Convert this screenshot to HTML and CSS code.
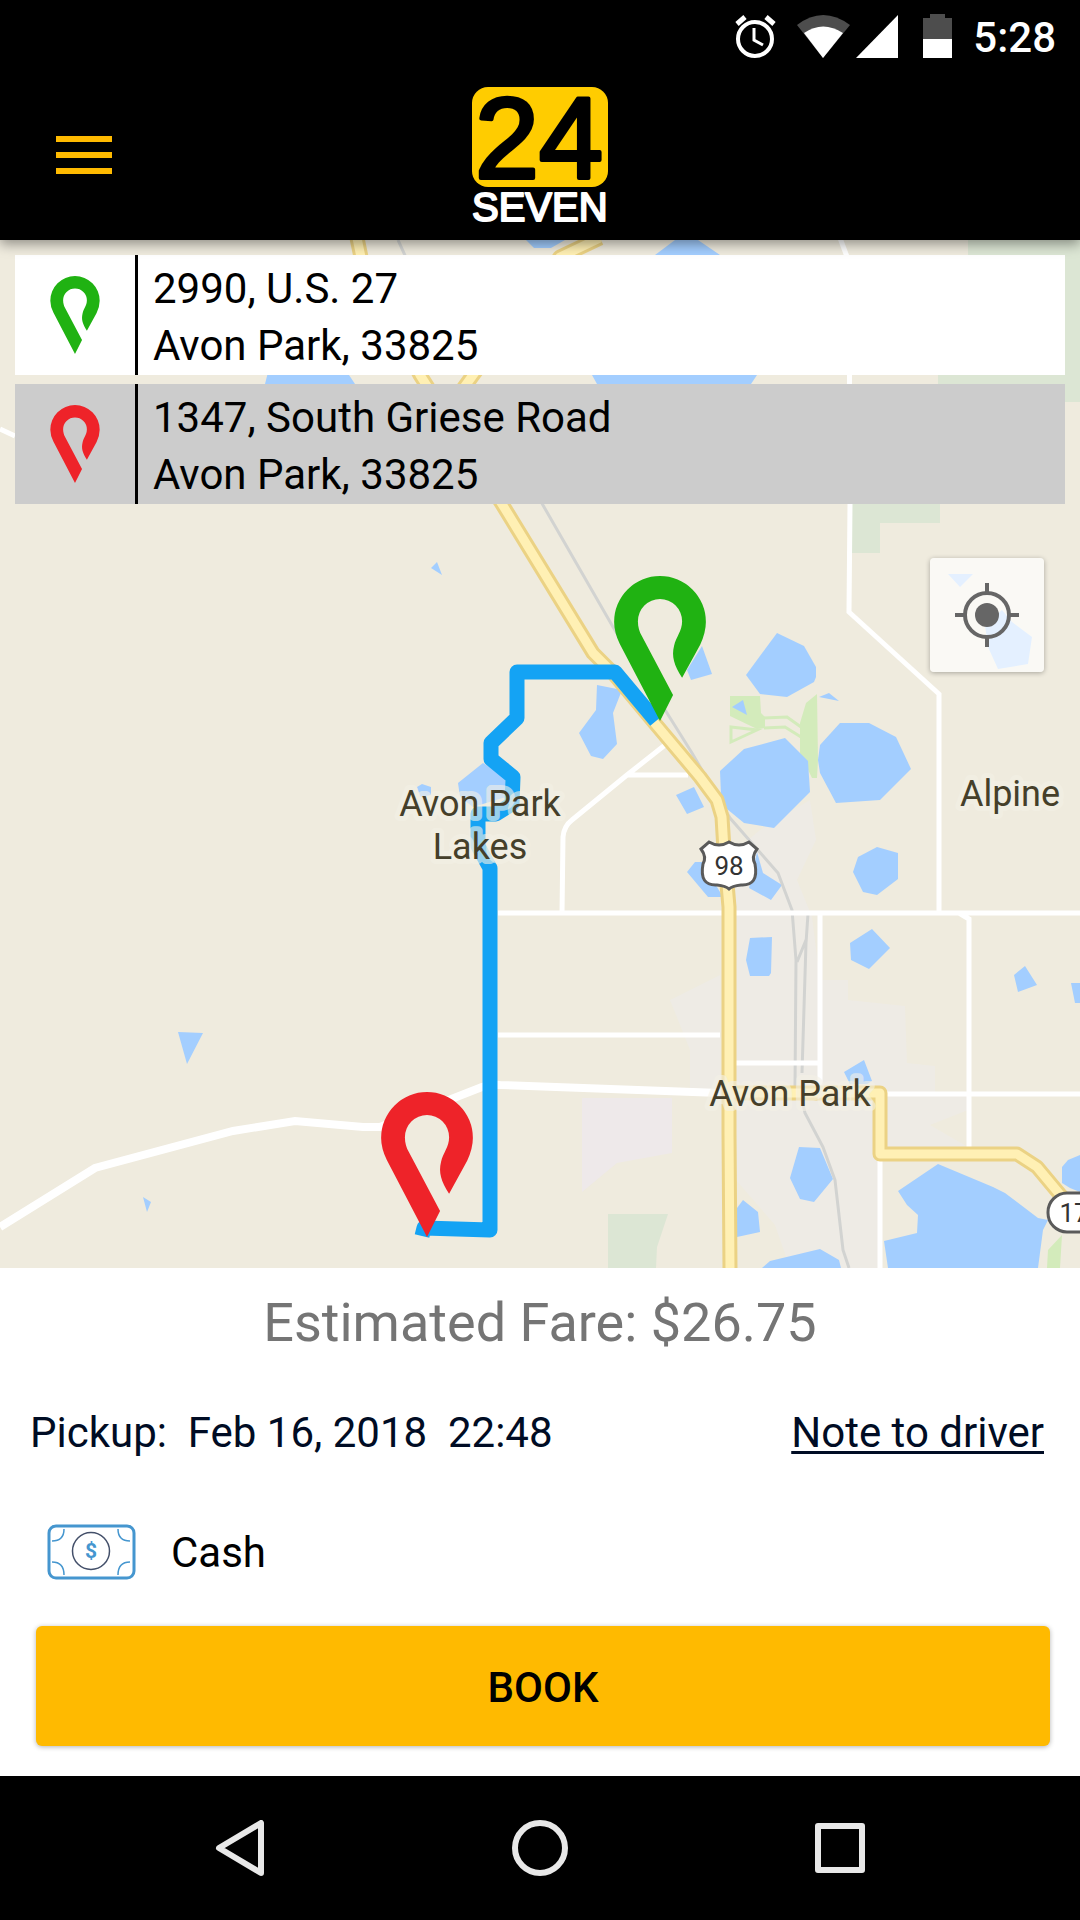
FILE: index.html
```html
<!DOCTYPE html>
<html lang="en">
<head>
    <meta charset="UTF-8">
    <meta name="viewport" content="width=device-width, initial-scale=1.0">
    <title>24 Seven</title>
    <link rel="stylesheet" href="styles.css">
</head>
<body>
    <!-- pin shape used in the address cards and on the map -->
    <svg class="sprite" width="0" height="0" aria-hidden="true">
        <symbol id="pin" viewBox="-137 -433 274 433">
            <path d="M0 0L-120 -230Q-137 -265 -137 -296A137 137 0 0 1 137 -296Q137 -265 120 -228L66 -129C42 -168 34 -192 42 -225C48 -252 66 -268 66 -298A66 66 0 0 0 -66 -298C-66 -280 -61 -266 -55 -255L39 -78Z"/>
        </symbol>
    </svg>

    <div class="status-bar">
        <svg class="alarm" width="41" height="44" viewBox="0 0 41 44">
            <circle cx="20" cy="25" r="17" fill="none" stroke="#fff" stroke-width="4"/>
            <path d="M2 10L10 3M39 10L31 3" stroke="#fff" stroke-width="5"/>
            <path d="M19 14V26L28 31" fill="none" stroke="#fff" stroke-width="3"/>
        </svg>
        <svg class="wifi" width="53" height="43" viewBox="0 0 53 43">
            <path d="M0 10Q26 -10 53 10L26 43Z" fill="#4d4d4d"/>
            <path d="M7 18Q26 5 46 18L26 43Z" fill="#fff"/>
        </svg>
        <svg class="signal" width="42" height="43" viewBox="0 0 42 43">
            <path d="M42 0V43H0Z" fill="#fff"/>
        </svg>
        <svg class="battery" width="29" height="44" viewBox="0 0 29 44">
            <path d="M0 4H7V0H22V4H29V25H0Z" fill="#4d4d4d"/>
            <path d="M0 25H29V44H0Z" fill="#fff"/>
        </svg>
        <span class="clock">5:28</span>
    </div>

    <header class="top-bar">
        <button class="menu" aria-label="Menu"><span></span><span></span><span></span></button>
        <svg class="logo" width="136" height="138" viewBox="0 0 136 138" role="img" aria-label="24 Seven">
            <rect width="136" height="100" rx="16" fill="#ffcc00"/>
            <text class="logo-num" x="3" y="91">24</text>
            <text class="logo-word" x="0" y="134">SEVEN</text>
        </svg>
        <span></span>
    </header>

    <main class="map">
        <svg class="map-canvas" viewBox="0 240 1080 1028" preserveAspectRatio="xMidYMid slice">
            <!-- town and parks -->
            <path class="town" d="M736 850L760 830L810 800L816 840L797 880L812 917L820 980H848V1000L905 1006L907 1063L935 1066V1092L968 1094V1110L930 1125L968 1147L880 1154V1268H790L775 1225L736 1180Z"/>
            <path class="town" d="M670 1000L720 975V1090H690V1050Z"/>
            <path class="mall" d="M582 1098H672V1153L617 1163L582 1192Z"/>
            <path class="park" d="M968 240H1080V402H1060V384H938V255H968ZM852 504H940V523H880V553H852ZM608 1214H668L657 1247L656 1268H608Z"/>
            <path class="golf" d="M730 696H760L761 713L765 717V728L757 729L730 716ZM817 694L818 760L817 778H812L800 753V723L806 703ZM1062 1235L1060 1268H1047L1048 1250Z"/>
            <path class="golf-line" d="M764 718L787 717L801 727M764 728L785 727L801 737M731 727L757 730L731 742Z"/>

            <!-- lakes -->
            <g class="water">
                <path d="M777 633L804 646L816 667V677L814 682L787 697L760 694L746 675Z"/>
                <path d="M785 738L808 761L810 792L774 828L744 823L727 809L721 795L720 771L744 749Z"/>
                <path d="M840 723H869L896 737L911 769L880 800L836 803L820 773L818 760L820 745Z"/>
                <path d="M877 847L898 853V879L877 895L863 892L853 872L858 857Z"/>
                <path d="M757 852L763 873L782 885L771 900L749 888ZM695 862H702L723 897H708L687 872Z"/>
                <path d="M819 697L829 693L839 701ZM732 707L743 700L747 715Z"/>
                <path d="M948 574H973L960 587ZM1012 622L1032 637L1028 664L998 669L988 647L985 625L1002 610Z"/>
                <path d="M655 255L675 240H698L720 255ZM592 375H757L751 384H597ZM265 384L268 372H347L355 384ZM526 240H565L551 248H534Z"/>
                <path d="M437 562L442 575L431 568ZM597 685L622 690L613 713L617 744L603 759L591 756L579 733L596 710Z"/>
                <path d="M702 646L712 674L691 680L687 670ZM676 795L694 787L704 807L687 814Z"/>
                <path d="M483 763L505 777L506 797L473 807L460 797L458 783ZM417 787L422 784L431 787V795L420 797Z"/>
                <path d="M178 1032L203 1033L187 1064ZM143 1197L151 1202L147 1212Z"/>
                <path d="M750 938L772 937L771 973L769 976H750L746 960ZM872 929L890 948L869 969L851 960L850 943Z"/>
                <path d="M1025 966L1037 985L1018 992L1014 975ZM1071 983H1080V1003H1075Z"/>
                <path d="M844 1072L864 1060L872 1081L867 1084H850ZM799 1147L820 1148L833 1179L814 1202L800 1199L790 1178Z"/>
                <path d="M743 1200L758 1212L760 1232L737 1237V1208ZM762 1268L770 1261L820 1249L839 1260L841 1268Z"/>
                <path d="M938 1164L993 1187L1005 1193L1038 1218L1048 1220L1043 1230L1038 1268H888L884 1241L917 1233L918 1215L907 1205L898 1191Z"/>
                <path d="M1080 1155L1068 1160L1062 1167V1183L1070 1188L1080 1192Z"/>
            </g>

            <!-- railway -->
            <path class="rail" d="M398 240L408 262M540 500L613 627L667 713L692 753L730 818L778 873L792 910L796 960L795 1087M808 914L806 943L802 1073M806 940L797 962M802 1100L805 1113L823 1147L835 1180L843 1250L849 1268"/>

            <!-- small roads -->
            <g class="road">
                <path d="M840 238L849 262L850 504L849 612L939 694V912"/>
                <path d="M498 913H1080M820 913V1092M959 913L969 919V1147M885 1094H1080M736 1063H820M498 1035H720M880 1160V1268"/>
                <path d="M562 913L563 837Q564 826 572 820L627 775L665 745M627 775H688M0 429L15 436"/>
                <path class="wide" d="M0 1227L95 1168L233 1131L295 1121L363 1127H380L482 1087Q490 1084 500 1085L720 1093"/>
            </g>

            <!-- highways -->
            <g class="highway-edge">
                <path d="M357 238L362 262L420 375L502 504L593 653L613 673L658 727L700 777L717 800L722 817L724 850L729 907V1133L730 1270"/>
                <path d="M600 238L560 257L473 375L455 400M729 1093H880V1154H1017L1037 1167L1062 1197"/>
            </g>
            <g class="highway">
                <path d="M357 238L362 262L420 375L502 504L593 653L613 673L658 727L700 777L717 800L722 817L724 850L729 907V1133L730 1270"/>
                <path d="M600 238L560 257L473 375L455 400M729 1093H880V1154H1017L1037 1167L1062 1197"/>
            </g>

            <path class="route" d="M656 721L615 672H517V718L491 743V759L513 777L512 804L496 814H478V846L490 868V1230L424 1228L422 1236"/>

            <!-- road signs -->
            <path class="sign" d="M709 842Q719 848 729 842Q739 848 749 842L757 849Q751 857 755 864Q759 886 741 885Q732 886 729 889Q726 886 717 885Q699 886 703 864Q707 857 701 849Z"/>
            <text class="sign-text" x="729" y="875">98</text>
            <rect class="sign" x="1048" y="1193" width="60" height="39" rx="19"/>
            <text class="sign-text" x="1074" y="1222">17</text>

            <text class="place" x="480" y="816">Avon Park</text>
            <text class="place" x="480" y="859">Lakes</text>
            <text class="place" x="1010" y="806">Alpine</text>
            <text class="place" x="790" y="1106">Avon Park</text>

            <use class="pin-from" href="#pin" x="614" y="576" width="92" height="145"/>
            <use class="pin-to" href="#pin" x="381" y="1092" width="92" height="145"/>
        </svg>

        <div class="addresses">
            <button class="address">
                <span class="address-icon"><svg class="pin-from" width="50" height="78"><use href="#pin"/></svg></span>
                <span class="address-text">2990, U.S. 27<br>Avon Park, 33825</span>
            </button>
            <button class="address address-to">
                <span class="address-icon"><svg class="pin-to" width="50" height="78"><use href="#pin"/></svg></span>
                <span class="address-text">1347, South Griese Road<br>Avon Park, 33825</span>
            </button>
        </div>

        <button class="locate" aria-label="My location">
            <svg width="64" height="64" viewBox="0 0 64 64">
                <circle cx="32" cy="32" r="22" fill="none" stroke="#666" stroke-width="4"/>
                <circle cx="32" cy="32" r="12" fill="#666"/>
                <path d="M32 0V10M32 54V64M0 32H10M54 32H64" stroke="#666" stroke-width="4"/>
            </svg>
        </button>
    </main>

    <section class="booking">
        <p class="fare">Estimated Fare: $26.75</p>
        <div class="pickup">
            <span class="pickup-time">Pickup:  Feb 16, 2018  22:48</span>
            <a href="#note">Note to driver</a>
        </div>
        <button class="payment">
            <svg width="89" height="56" viewBox="0 0 89 56">
                <rect x="2" y="2" width="85" height="52" rx="7" fill="none" stroke="#4596cf" stroke-width="3"/>
                <path d="M17 5Q17 17 5 17M71 5Q71 17 83 17M5 38Q17 38 17 51M83 38Q71 38 71 51" fill="none" stroke="#4596cf" stroke-width="1.5"/>
                <circle cx="44" cy="27" r="18.5" fill="none" stroke="#44506a" stroke-width="1.5"/>
                <text class="dollar" x="44" y="34">$</text>
            </svg>
            <span>Cash</span>
        </button>
        <button class="book">BOOK</button>
    </section>

    <nav class="nav-bar">
        <button aria-label="Back">
            <svg width="56" height="56" viewBox="0 0 56 56"><path d="M49 3V53L7 28Z"/></svg>
        </button>
        <button aria-label="Home">
            <svg width="56" height="56" viewBox="0 0 56 56"><circle cx="28" cy="28" r="25"/></svg>
        </button>
        <button aria-label="Recent apps">
            <svg width="56" height="56" viewBox="0 0 56 56"><rect x="6" y="6" width="44" height="44"/></svg>
        </button>
    </nav>
</body>
</html>
```

FILE: styles.css
```css
* {
    box-sizing: border-box;
}
body {
    margin: 0;
    min-height: 100vh;
    display: flex;
    flex-direction: column;
    font-family: Roboto, "Liberation Sans", sans-serif;
    font-size: 42px;
    color: #000;
    background: #fff;
}
button {
    font: inherit;
    color: inherit;
    background: none;
    border: none;
    padding: 0;
    cursor: pointer;
}
svg {
    display: block;
}
.sprite {
    position: absolute;
}

/* status bar */
.status-bar {
    display: flex;
    justify-content: flex-end;
    align-items: center;
    height: 72px;
    padding-right: 24px;
    background: #000;
    color: #fff;
}
.wifi {
    margin-left: 21px;
}
.signal {
    margin-left: 6px;
}
.battery {
    margin-left: 25px;
}
.clock {
    margin-left: 21px;
    padding-top: 4px;
    font-weight: 500;
    line-height: 48px;
}

/* header */
.top-bar {
    display: grid;
    grid-template-columns: 1fr auto 1fr;
    align-items: center;
    height: 168px;
    padding: 0 56px;
    background: #000;
    box-shadow: 0 4px 12px rgba(0, 0, 0, 0.4);
    z-index: 1;
}
.menu {
    display: flex;
    flex-direction: column;
    gap: 10px;
    width: 56px;
    padding-bottom: 2px;
}
.menu span {
    height: 6px;
    background: #ffba00;
}
.logo {
    overflow: visible;
}
.logo-num,
.logo-word {
    font-family: "Liberation Sans", Arial, sans-serif;
    stroke-linejoin: round;
}
.logo-num {
    font-size: 115px;
    stroke: #000;
    stroke-width: 4px;
}
.logo-word {
    font-size: 40px;
    fill: #fff;
    stroke: #fff;
    stroke-width: 2px;
}

/* map */
.map {
    position: relative;
    flex: 1;
    min-height: 600px;
    padding: 15px;
    background: #efebde;
}
.map-canvas {
    position: absolute;
    top: 0;
    left: 0;
    width: 100%;
    height: 100%;
}
.town {
    fill: #eeebe5;
}
.mall {
    fill: #eee9ea;
}
.park {
    fill: #dce6d4;
}
.golf {
    fill: #d3ebbb;
}
.golf-line {
    fill: none;
    stroke: #d3ebbb;
    stroke-width: 3px;
}
.water {
    fill: #a3ceff;
}
.rail {
    fill: none;
    stroke: #d2d3d1;
    stroke-width: 3px;
}
.road {
    fill: none;
    stroke: #fff;
    stroke-width: 5px;
}
.wide {
    stroke-width: 8px;
}
.highway-edge {
    fill: none;
    stroke: #ebd284;
    stroke-width: 15px;
    stroke-linejoin: round;
}
.highway {
    fill: none;
    stroke: #fff0b4;
    stroke-width: 9px;
    stroke-linejoin: round;
}
.route {
    fill: none;
    stroke: #14a3f4;
    stroke-width: 15px;
    stroke-linejoin: round;
}
.sign {
    fill: #fff;
    stroke: #5a5a5a;
    stroke-width: 3px;
}
.sign-text {
    font-size: 26px;
    fill: #333;
    text-anchor: middle;
}
.place {
    font-size: 36px;
    fill: #453f2a;
    text-anchor: middle;
    stroke: rgba(244, 241, 230, 0.6);
    stroke-width: 10px;
    stroke-linejoin: round;
    paint-order: stroke;
}
.pin-from {
    fill: #20b212;
}
.pin-to {
    fill: #ee2329;
}
.addresses {
    position: relative;
    display: flex;
    flex-direction: column;
    gap: 9px;
}
.address {
    display: flex;
    height: 120px;
    background: #fff;
    text-align: left;
}
.address-to {
    background: #ccc;
}
.address-icon {
    display: flex;
    align-items: center;
    justify-content: center;
    width: 123px;
    height: 120px;
    border-right: 3px solid #000;
}
.address-text {
    padding: 5px 15px 0;
    line-height: 57px;
}
.locate {
    position: absolute;
    top: 318px;
    right: 36px;
    display: flex;
    align-items: center;
    justify-content: center;
    width: 114px;
    height: 114px;
    background: rgba(255, 255, 255, 0.7);
    border-radius: 4px;
    box-shadow: 0 1px 5px rgba(0, 0, 0, 0.3);
}

/* booking panel */
.booking {
    display: flex;
    flex-direction: column;
    padding: 23px 30px 30px;
}
.fare {
    margin: 0 0 53px;
    font-size: 54px;
    line-height: 64px;
    text-align: center;
    color: #757575;
}
.pickup {
    display: flex;
    justify-content: space-between;
    padding-right: 6px;
    margin-bottom: 66px;
    line-height: 50px;
    color: #000c24;
}
.pickup-time {
    white-space: pre;
}
.pickup a {
    color: inherit;
    text-decoration-thickness: 3px;
    text-underline-offset: 4px;
}
.payment {
    display: flex;
    align-items: center;
    gap: 35px;
    height: 56px;
    margin: 0 0 46px 17px;
}
.dollar {
    font-size: 21px;
    font-weight: bold;
    fill: #4596cf;
    text-anchor: middle;
}
.book {
    height: 120px;
    margin-left: 6px;
    padding-top: 2px;
    background: #ffba00;
    border-radius: 6px;
    box-shadow: 0 1px 5px rgba(0, 0, 0, 0.3);
    font-weight: 500;
}

/* android buttons */
.nav-bar {
    display: grid;
    grid-template-columns: repeat(3, 1fr);
    justify-items: center;
    align-items: center;
    height: 144px;
    padding: 0 90px;
    background: #000;
}
.nav-bar svg {
    fill: none;
    stroke: #e8e8e8;
    stroke-width: 6px;
    stroke-linejoin: round;
}
```
